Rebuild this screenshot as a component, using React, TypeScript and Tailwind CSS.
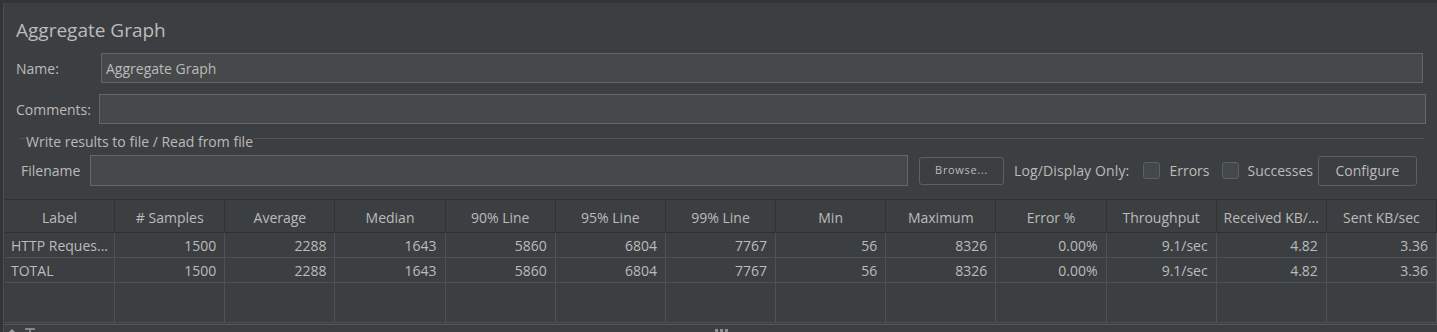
import React from 'react';

const headers = [
  'Label', '# Samples', 'Average', 'Median', '90% Line', '95% Line', '99% Line',
  'Min', 'Maximum', 'Error %', 'Throughput', 'Received KB/...', 'Sent KB/sec',
];

const rows = [
  ['HTTP Reques...', '1500', '2288', '1643', '5860', '6804', '7767', '56', '8326', '0.00%', '9.1/sec', '4.82', '3.36'],
  ['TOTAL', '1500', '2288', '1643', '5860', '6804', '7767', '56', '8326', '0.00%', '9.1/sec', '4.82', '3.36'],
];

const Checkbox: React.FC<{ label: string }> = ({ label }) => (
  <div className="flex items-center">
    <div className="w-[17px] h-[17px] rounded-[3px] border border-[#5e6060] bg-[#43494a]"></div>
    <span className="ml-[9px]">{label}</span>
  </div>
);

const App: React.FC = () => {
  return (
    <div
      className="w-[1437px] h-[332px] overflow-hidden bg-[#3c3f41] text-[#bbbbbb] text-[14px] flex flex-col"
      style={{ fontFamily: '"Open Sans", "Noto Sans", sans-serif' }}
    >
      {/* top strip */}
      <div className="h-[3px] bg-[#323436] shrink-0"></div>

      <div className="flex flex-1 min-h-0">
        {/* left gutter */}
        <div className="w-[3px] bg-[#323436] shrink-0"></div>
        <div className="w-px bg-[#4b4e50] shrink-0"></div>

        <div className="flex-1 flex flex-col min-w-0">
          {/* Title */}
          <div className="pl-[12px] pt-[15px] h-[38px] text-[19px] leading-[24px]">Aggregate Graph</div>

          {/* Name */}
          <div className="flex items-center mt-[12px] h-[30px] pl-[12px]">
            <span className="w-[85px] shrink-0">Name:</span>
            <div className="w-[1322px] h-[30px] bg-[#45494a] border border-[#646767] flex items-center pl-[4px]">
              Aggregate Graph
            </div>
          </div>

          {/* Comments */}
          <div className="flex items-center mt-[11px] h-[30px] pl-[12px]">
            <span className="w-[83px] shrink-0">Comments:</span>
            <div className="w-[1327px] h-[30px] bg-[#45494a] border border-[#646767]"></div>
          </div>

          {/* Write results titled border */}
          <div className="flex items-center h-[31px] pl-[16px] pr-[13px]">
            <div className="w-[5px] h-px bg-[#535658] -mt-[3px]"></div>
            <span className="px-[1px] pt-[4px]">Write results to file / Read from file</span>
            <div className="flex-1 h-px bg-[#535658] -mt-[3px]"></div>
          </div>

          {/* Filename row */}
          <div className="flex items-center h-[31px] pl-[17px]">
            <span className="w-[69px] shrink-0">Filename</span>
            <div className="w-[818px] h-[31px] bg-[#45494a] border border-[#646767]"></div>
            <button className="ml-[11px] w-[85px] h-[28px] rounded-[3px] border border-[#5e6060] bg-[#3c3f41] text-[11px] tracking-[0.06em] text-[#bbbbbb]">
              Browse...
            </button>
            <span className="ml-[10px] tracking-[0.01em]">Log/Display Only:</span>
            <div className="ml-[14px]">
              <Checkbox label="Errors" />
            </div>
            <div className="ml-[12px]">
              <Checkbox label="Successes" />
            </div>
            <button className="ml-[5px] w-[99px] h-[30px] rounded-[3px] border border-[#5e6060] bg-[#3c3f41] text-[14px] text-[#bbbbbb]">
              Configure
            </button>
          </div>

          {/* Table */}
          <div className="mt-[13px] ml-[1px] w-[1432px] flex flex-col">
            <div className="grid grid-cols-13 h-[34px] border-t border-b border-[#2f3133]">
              {headers.map((h, i) => (
                <div
                  key={i}
                  className="flex items-center justify-center pt-[2px] border-r border-[#2f3133] whitespace-nowrap overflow-hidden"
                >
                  {h}
                </div>
              ))}
            </div>
            {rows.map((r, ri) => (
              <div key={ri} className="grid grid-cols-13 h-[25px] border-b border-[#4f5254]">
                {r.map((c, ci) => (
                  <div
                    key={ci}
                    className={`flex items-center border-r border-[#4f5254] whitespace-nowrap overflow-hidden ${
                      ci === 0 ? 'justify-start pl-[6px]' : 'justify-end pr-[8px]'
                    }`}
                  >
                    {c}
                  </div>
                ))}
              </div>
            ))}
            <div className="grid grid-cols-13 h-[40px] border-b border-[#4f5254]">
              {headers.map((_, i) => (
                <div key={i} className="border-r border-[#4f5254]"></div>
              ))}
            </div>
          </div>

          {/* bottom strip */}
          <div className="relative flex-1 border-t border-[#55585a] mt-[1px]">
            <svg className="absolute left-[4px] top-[3px]" width="30" height="8" viewBox="0 0 30 8">
              <path d="M4 1 L8 5 L0 5 Z" fill="#9a9c9e" />
              <path d="M0 6 H8" stroke="#9a9c9e" strokeWidth="1" />
              <path d="M17 1 H27 M22 1 V8" stroke="#9a9c9e" strokeWidth="1.5" />
            </svg>
            <div className="absolute left-[711px] top-[4px] flex gap-[2px]">
              <div className="w-[3px] h-[3px] bg-[#8c8e90]"></div>
              <div className="w-[3px] h-[3px] bg-[#8c8e90]"></div>
              <div className="w-[3px] h-[3px] bg-[#8c8e90]"></div>
            </div>
          </div>
        </div>
      </div>
    </div>
  );
};

export default App;
